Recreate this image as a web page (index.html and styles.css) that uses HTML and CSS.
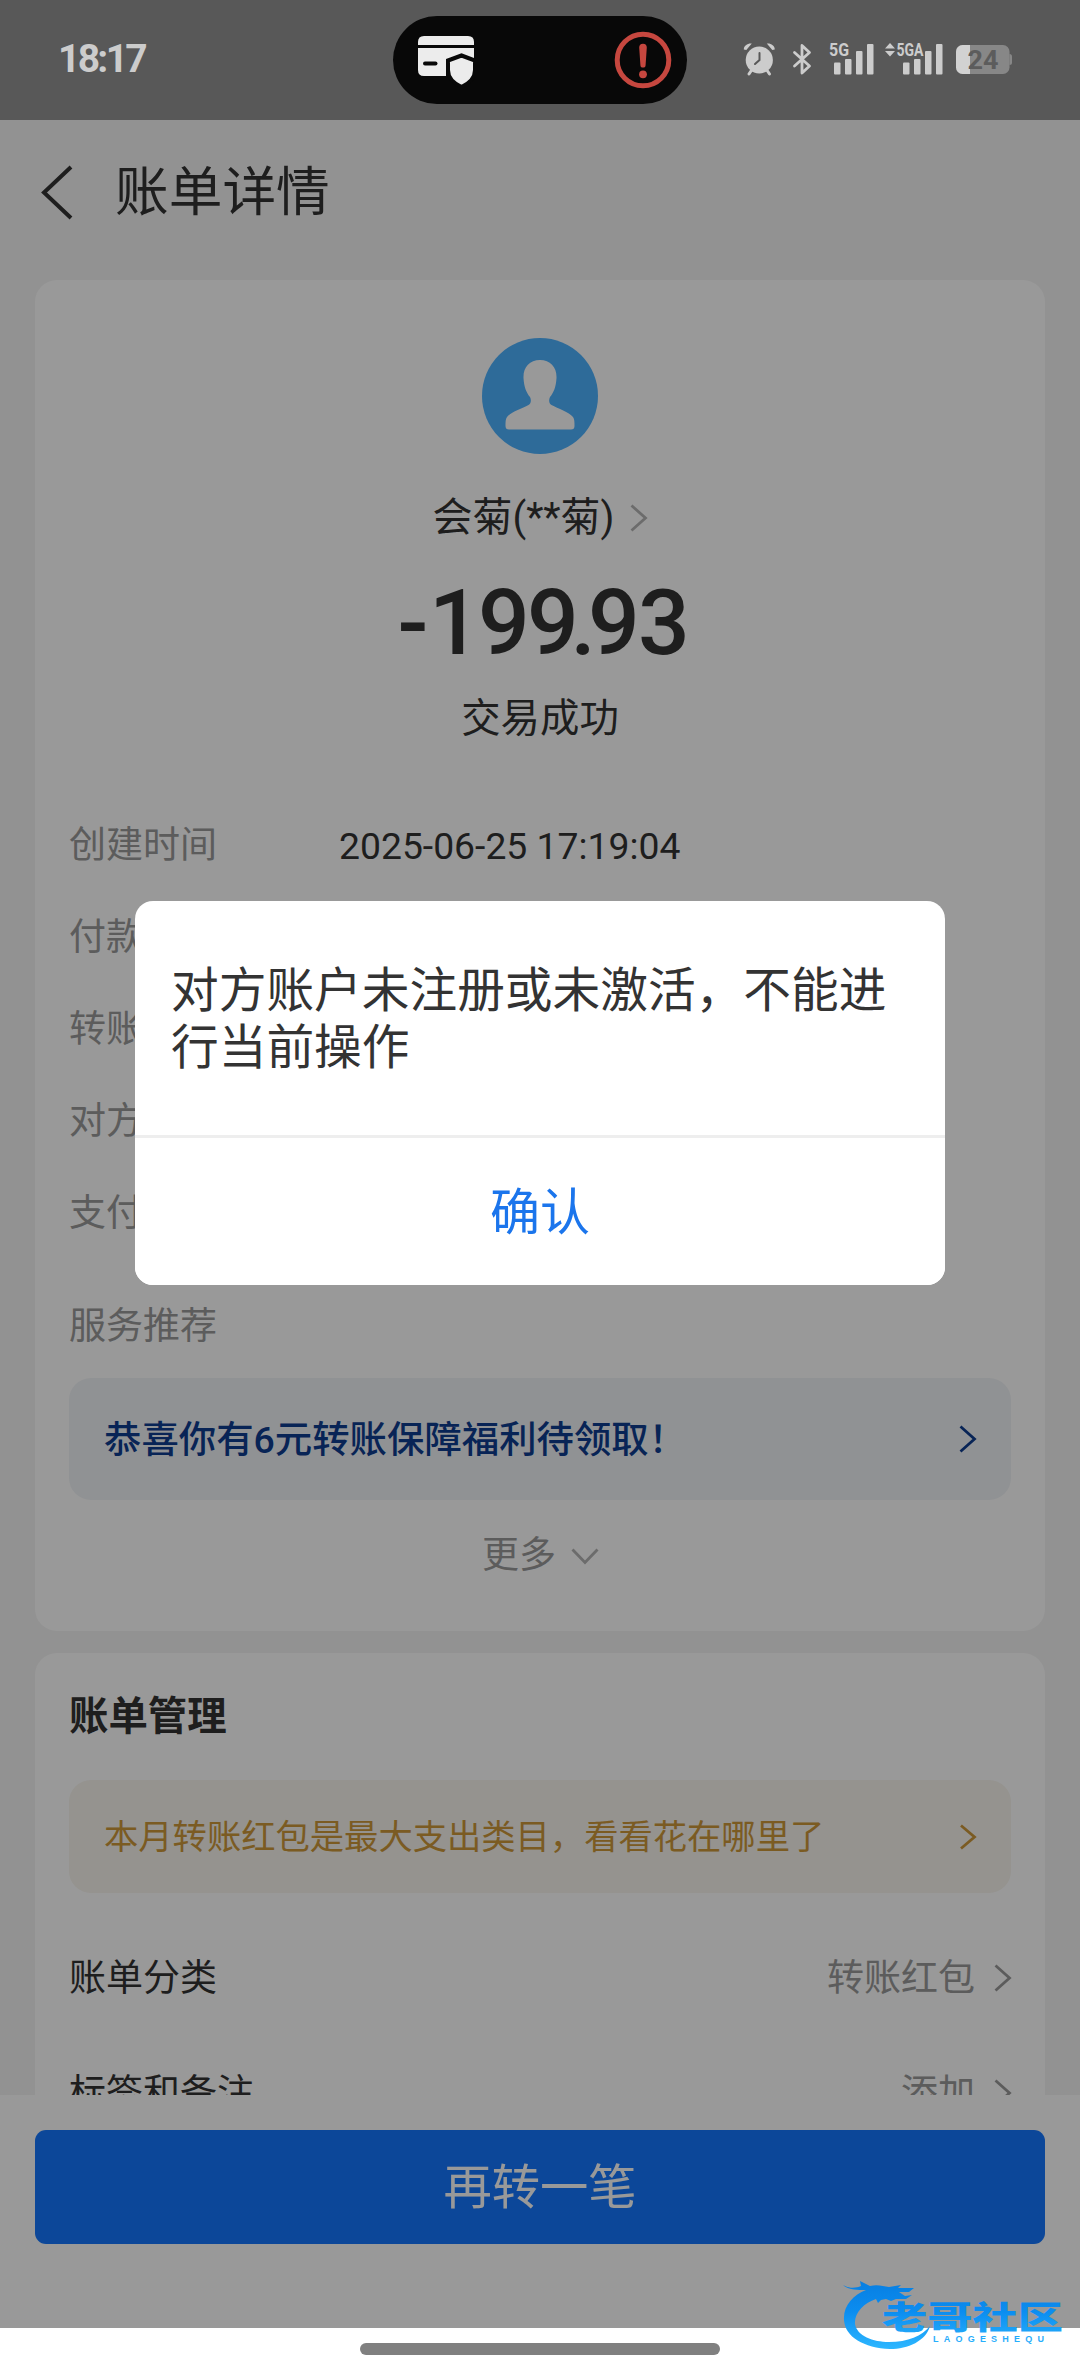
FILE: index.html
```html
<!DOCTYPE html>
<html lang="zh-CN">
<head>
<meta charset="utf-8">
<title>账单详情</title>
<link rel="stylesheet" href="styles.css">
</head>
<body>
<div class="screen">
  <header class="statusbar">
    <span class="clock">18:17</span>
    <div class="island">
      <svg class="island-card" width="58" height="52" viewBox="0 0 58 52">
        <path d="M6 0H50Q56 0 56 6V9H0V6Q0 0 6 0Z" fill="#ececec"/>
        <path d="M0 12H56V26L44 21L28 26V40H6Q0 40 0 34Z" fill="#ececec"/>
        <path d="M7 27.5H17.5" stroke="#080808" stroke-width="4" stroke-linecap="round"/>
        <path d="M43.500 19.500L57 24.500V34C57 42 50 48 43.500 51C37 48 30 42 30 34V24.500Z" fill="#ececec" stroke="#080808" stroke-width="4"/>
      </svg>
      <svg width="58" height="58" viewBox="0 0 58 58">
        <circle cx="29" cy="29" r="25.800" fill="none" stroke="#c6473f" stroke-width="5"/>
        <path d="M25.200 16.500a3.800 3.800 0 0 1 7.600 0L31.600 34a2.600 2.600 0 0 1-5.200 0Z" fill="#c6473f"/>
        <circle cx="29" cy="43.300" r="3.900" fill="#c6473f"/>
      </svg>
    </div>
    <svg class="indicators" width="280" height="44" viewBox="740 38 280 44">
      <g fill="#ccc" stroke="#ccc" stroke-linecap="round">
        <circle cx="759.300" cy="60" r="13.600" stroke="none"/>
        <path d="M751 71l-2 3M767.500 71l2 3" stroke-width="3"/>
        <path d="M743.800 49.500c0-4 4-6.500 8-6l-5.500 6.500zM774.800 49.500c0-4-4-6.500-8-6l5.500 6.500z" stroke="none"/>
        <path d="M759.500 53v7l-4.500 4" fill="none" stroke="#585858" stroke-width="2"/>
        <path d="M794.500 52.500l15 13.500-7.500 7V45.500l7.500 7L794.500 66" fill="none" stroke-width="2.800" stroke-linejoin="round"/>
      </g>
      <g fill="#ccc">
        <text class="net" x="829" y="56" textLength="20" lengthAdjust="spacingAndGlyphs">5G</text>
        <rect x="834" y="62.500" width="6.500" height="12" rx="1"/><rect x="845" y="59" width="6.500" height="15.500" rx="1"/><rect x="856" y="51" width="6.500" height="23.500" rx="1"/><rect x="867" y="44" width="6.500" height="30.500" rx="1"/>
        <path d="M885 48.500l5-5.500 5 5.500zM885 51l5 5.500 5-5.500z"/>
        <text class="net" x="896.500" y="56" textLength="27" lengthAdjust="spacingAndGlyphs">5GA</text>
        <rect x="903" y="62.500" width="6.500" height="12" rx="1"/><rect x="914" y="59" width="6.500" height="15.500" rx="1"/><rect x="925" y="51" width="6.500" height="23.500" rx="1"/><rect x="936" y="44" width="6.500" height="30.500" rx="1"/>
        <rect x="956" y="45" width="53.500" height="29" rx="6.500" fill="#878787"/>
        <path d="M970 45H962.500a6.500 6.500 0 0 0-6.500 6.500v16a6.500 6.500 0 0 0 6.500 6.500H970z" fill="#d2d2d2"/>
        <path d="M1009.500 54q2.500 0 2.500 2.500v6q0 2.500-2.500 2.500z" fill="#878787"/>
        <text class="battery" x="967.500" y="69" textLength="31" lengthAdjust="spacingAndGlyphs">24</text>
      </g>
    </svg>
  </header>

  <div class="app">
    <nav class="titlebar">
      <svg width="34" height="56" viewBox="0 0 34 56"><path d="M31 2L4 27.500L31 53" fill="none" stroke="#333" stroke-width="4"/></svg>
      <h1>账单详情</h1>
    </nav>
    <main class="content">
      <section class="card summary">
        <svg class="avatar" width="116" height="116" viewBox="0 0 116 116">
          <circle cx="58" cy="58" r="58" fill="#4db2ff"/>
          <path d="M58 22C47.500 22 41 29.500 41.500 40C42 49 44.500 55 48 59C49.500 62 49 65.500 46.500 67C40 70.500 29 74 25 79C23.500 81 23.500 84 23.500 88Q23.500 91.500 27 91.500H89Q92.500 91.500 92.500 88C92.500 84 92.500 81 91 79C87 74 76 70.500 69.500 67C67 65.500 66.500 62 68 59C71.500 55 74 49 74.500 40C75 29.500 68.500 22 58 22Z" fill="#fff"/>
        </svg>
        <div class="payee"><span>会菊(**菊)</span>
          <svg width="18" height="28" viewBox="0 0 18 28"><path class="chev grey" d="M1.500 1.500L15.500 14L1.500 26.500"/></svg>
        </div>
        <svg class="amount" width="300" height="90" viewBox="390 577 300 90">
          <text y="654" x="397.500 429 478 527 570.500 588 638">-199.93</text>
        </svg>
        <div class="state">交易成功</div>
        <dl class="details">
          <div class="detail"><dt>创建时间</dt><dd>2025-06-25 17:19:04</dd></div>
          <div class="detail"><dt>付款</dt></div>
          <div class="detail"><dt>转账</dt></div>
          <div class="detail"><dt>对方</dt></div>
          <div class="detail"><dt>支付</dt></div>
        </dl>
        <h2 class="service">服务推荐</h2>
        <div class="banner promo"><span>恭喜你有6元转账保障福利待领取！</span>
          <svg width="18" height="28" viewBox="0 0 18 28"><path class="chev navy" d="M1.500 1.500L15.500 14L1.500 26.500"/></svg>
        </div>
        <div class="more"><span>更多</span>
          <svg width="28" height="18" viewBox="0 0 28 18"><path class="chev grey" d="M1.500 1.500L14 14.500L26.500 1.500"/></svg>
        </div>
      </section>
      <section class="card manage">
        <h2>账单管理</h2>
        <div class="banner tip"><span>本月转账红包是最大支出类目，看看花在哪里了</span>
          <svg width="18" height="26" viewBox="0 0 18 26"><path class="chev gold" d="M2 1.500L15.500 13L2 24.500"/></svg>
        </div>
        <div class="item"><span>账单分类</span><span class="value">转账红包</span>
          <svg width="18" height="28" viewBox="0 0 18 28"><path class="chev dim" d="M1.500 1.500L15.500 14L1.500 26.500"/></svg>
        </div>
        <div class="item"><span>标签和备注</span><span class="value">添加</span>
          <svg width="18" height="28" viewBox="0 0 18 28"><path class="chev dim" d="M1.500 1.500L15.500 14L1.500 26.500"/></svg>
        </div>
      </section>
    </main>
    <footer class="actions"><button class="again">再转一笔</button></footer>
    <div class="backdrop">
      <div class="dialog">
        <p>对方账户未注册或未激活，不能进行当前操作</p>
        <button class="confirm">确认</button>
      </div>
    </div>
  </div>

  <div class="homebar"><i></i></div>

  <svg class="watermark" width="230" height="76" viewBox="840 2276 230 76">
    <defs><linearGradient id="wm" gradientUnits="userSpaceOnUse" x1="0" y1="2282" x2="0" y2="2348"><stop offset="0" stop-color="#087fe2"/><stop offset=".45" stop-color="#0b8df0"/><stop offset="1" stop-color="#2cb6ff"/></linearGradient></defs>
    <g fill="url(#wm)">
      <path d="M843 2285C850 2289 856 2288 861 2286L860 2281L870 2286C877 2284 883 2286 889 2287L901 2285L898 2288L914 2288L909 2292L899 2292L905 2296L912 2295L906 2299L896 2299L891 2301L886 2299L881 2300L878 2303L876 2299C864 2303 854 2313 855 2324C857 2336 873 2342 889 2342C908 2342 922 2336 930 2326C926 2341 908 2349 890 2349C864 2348 845 2337 844 2320C843 2306 853 2295 866 2290C857 2290 848 2290 843 2285Z"/>
      <text class="wm-cn" x="882" y="2329" textLength="181" lengthAdjust="spacingAndGlyphs">老哥社区</text>
      <text class="wm-en" x="933" y="2342" textLength="111">LAOGESHEQU</text>
    </g>
  </svg>
</div>
</body>
</html>
```
FILE: styles.css
```css
* { box-sizing: border-box; margin: 0; padding: 0; }
html, body { width: 1080px; height: 2376px; overflow: hidden; background: #fff; }
body { font-family: Roboto, "Noto Sans CJK SC", sans-serif; color: #333; }
svg { display: block; flex: none; }
button { border: 0; font-family: inherit; }

.screen { position: relative; width: 1080px; height: 2376px; display: flex; flex-direction: column; }

/* status bar */
.statusbar { height: 120px; flex: none; background: #585858; display: grid; grid-template-columns: 393px 294px 1fr; padding-top: 16px; }
.clock { padding-left: 58px; line-height: 87px; font-size: 39px; font-weight: 700; letter-spacing: -2.700px; color: #ccc; }
.island { height: 88px; border-radius: 44px; background: #080808; display: flex; align-items: center; justify-content: space-between; padding: 0 15px 0 25px; }
.island-card { margin-top: 4px; }
.indicators { margin: 22px 0 0 53px; }
.net { font: 700 18px Roboto, sans-serif; }
.battery { font: 700 26px Roboto, sans-serif; fill: #5c5c5c; }

/* application page */
.app { position: relative; height: 2208px; flex: none; display: flex; flex-direction: column; background: #f4f4f4; }
.titlebar { height: 160px; flex: none; display: flex; align-items: center; padding: 0 40px 14px; gap: 41px; }
.titlebar h1 { font-size: 53.700px; font-weight: 400; line-height: 60px; }
.content { height: 1815px; flex: none; overflow: hidden; padding: 0 35px; display: flex; flex-direction: column; gap: 22px; }
.card { background: #fff; border-radius: 22px; padding: 0 34px; flex: none; }

.summary { height: 1351px; padding-top: 58px; display: flex; flex-direction: column; }
.avatar { align-self: center; }
.payee { height: 50px; margin-top: 39px; display: flex; align-items: center; justify-content: center; gap: 15px; font-size: 40px; line-height: 50px; }
.amount { margin-top: 34px; align-self: center; font: 500 91px Roboto, sans-serif; fill: #333; }
.state { height: 50px; margin-top: 27px; text-align: center; font-size: 39.400px; line-height: 50px; }
.details { margin-top: 56px; }
.detail { height: 92px; display: flex; align-items: center; font-size: 37px; line-height: 50px; }
.detail dt { width: 270px; color: #999; }
.detail dd { font-size: 37.300px; }
.service { margin-top: 42px; height: 50px; font-size: 37px; font-weight: 400; line-height: 50px; color: #999; }

.banner { display: flex; align-items: center; justify-content: space-between; border-radius: 22px; padding: 0 34px 0 35px; }
.banner span { padding-bottom: 5px; }
.promo { margin-top: 26px; height: 122px; background: #f1f4f7; color: #0e3c8f; font-size: 37.400px; font-weight: 500; }
.more { height: 50px; margin-top: 27px; display: flex; align-items: center; justify-content: center; gap: 15px; padding-left: 1px; font-size: 37px; color: #999; }
.more svg { margin-top: 10px; }

.manage { height: 700px; padding-top: 39px; }
.manage h2 { font-size: 39.400px; line-height: 50px; font-weight: 700; }
.tip { margin-top: 38px; height: 113px; background: #f8f5ee; color: #cd983a; font-size: 34.300px; }
.item { height: 115px; display: flex; align-items: center; font-size: 37px; margin-right: -1px; }
.item span { padding-bottom: 5px; }
.tip + .item { margin-top: 27px; }
.item .value { margin-left: auto; margin-right: 19px; color: #999; }

.chev { fill: none; stroke-width: 2.800; }
.grey { stroke: #b4b4b4; }
.dim { stroke: #9a9a9a; }
.navy { stroke: #0e3c8f; }
.gold { stroke: #cd983a; }

.actions { flex: 1; background: #fff; padding: 35px 35px 0; }
.again { display: block; width: 100%; height: 114px; padding-bottom: 8px; border-radius: 11px; background: #1477ff; color: #fff; font-size: 48.300px; }

/* modal */
.backdrop { position: absolute; inset: 0; background: rgba(0, 0, 0, .4); padding: 781px 135px 0; }
.dialog { height: 384px; border-radius: 18px; background: #fff; overflow: hidden; display: flex; flex-direction: column; }
.dialog p { height: 234px; padding: 62px 36px 0; font-size: 47.700px; line-height: 57px; }
.confirm { flex: 1; padding-bottom: 8px; border-top: 3px solid #eee; background: #fff; color: #1b75ec; font-size: 50px; }

.homebar { flex: 1; background: #fff; display: flex; justify-content: center; padding-top: 15px; }
.homebar i { width: 360px; height: 12px; border-radius: 6px; background: #808080; }

/* site mark stamped over the page corner */
.watermark { position: absolute; left: 840px; top: 2276px; }
.wm-cn { font: 900 32px "Noto Sans CJK SC", sans-serif; }
.wm-en { font: 700 9px "Liberation Sans", sans-serif; }
```
